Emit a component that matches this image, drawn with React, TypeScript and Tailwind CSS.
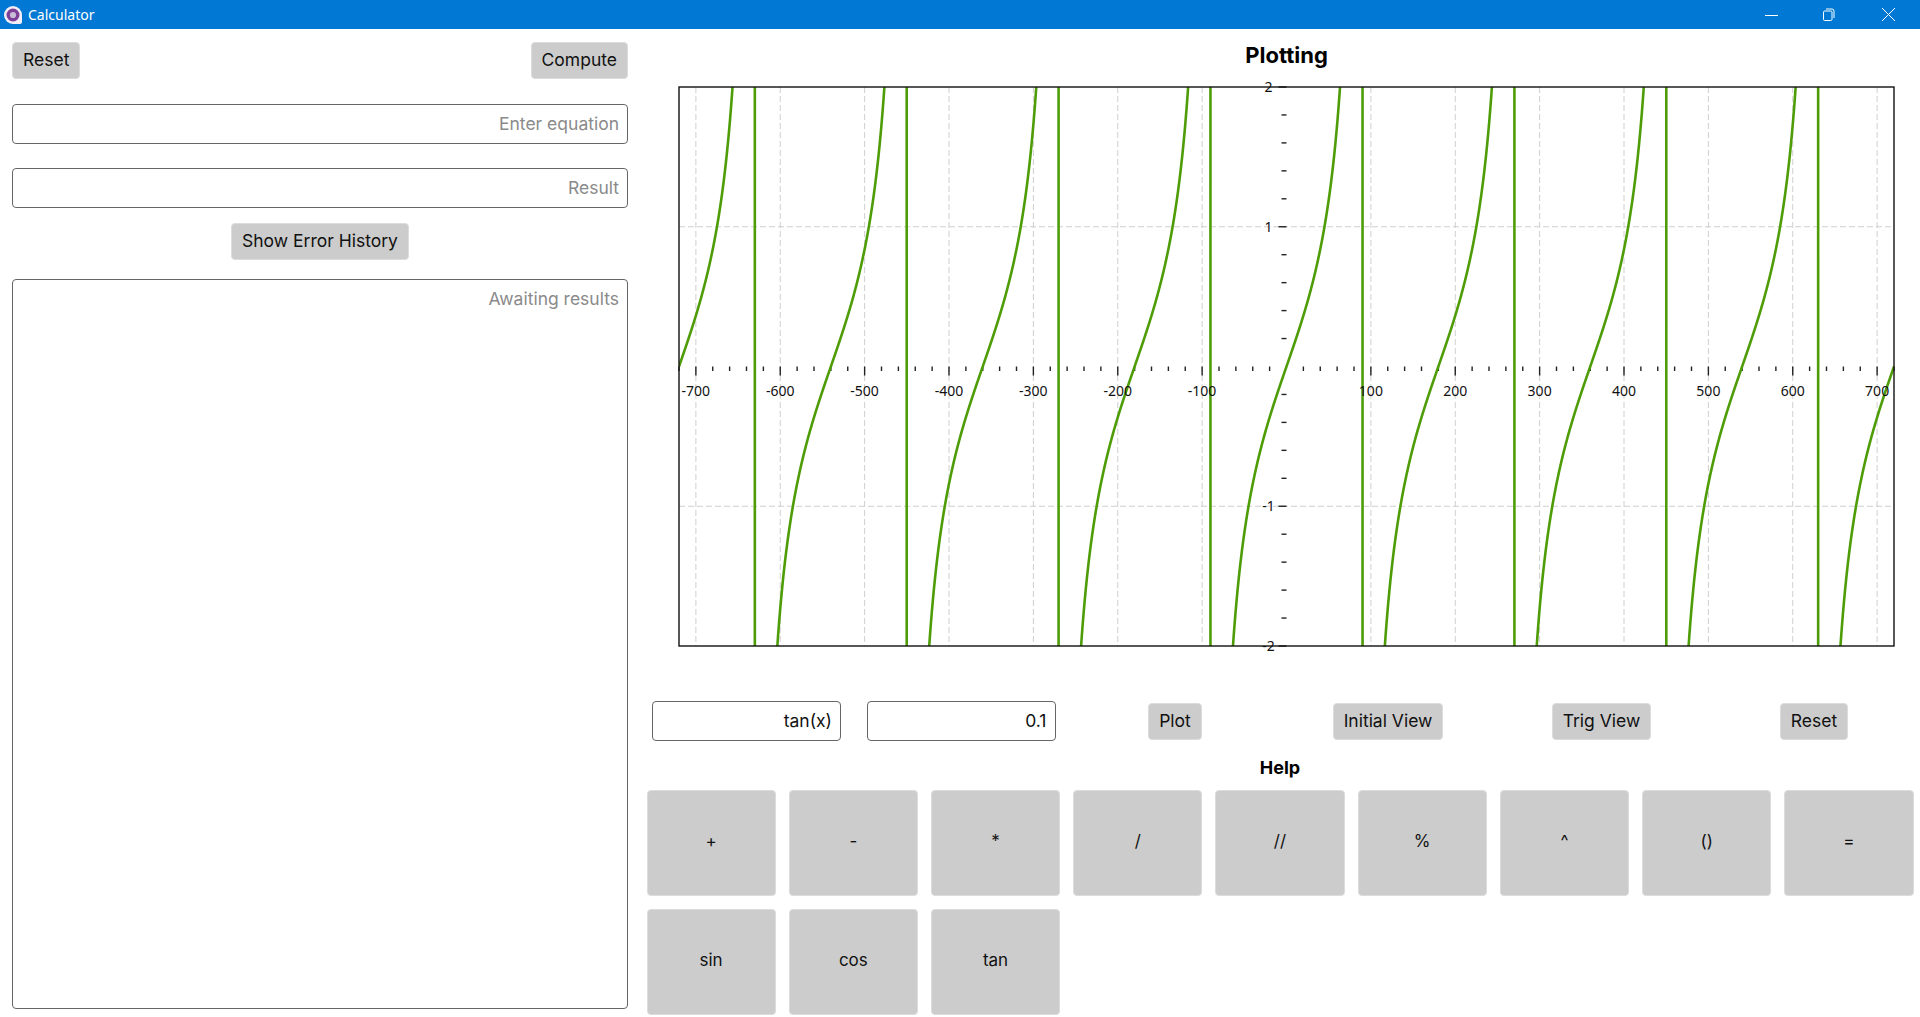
import React from 'react';

const W = 1215;
const H = 559;
const sx = W / 1440;
const sy = H / 4;
const px = (x: number) => W / 2 + x * sx;
const py = (y: number) => H / 2 - y * sy;

const buildCurve = () => {
  const pts: string[] = [];
  for (let d = -720; d <= 720; d += 0.25) {
    const t = Math.tan((d * Math.PI) / 180);
    pts.push(`${px(d).toFixed(2)},${py(Math.max(-40, Math.min(40, t))).toFixed(2)}`);
  }
  return pts.join(' ');
};

const Plot = () => {
  const xMajor: number[] = [];
  const xMinor: number[] = [];
  for (let v = -720; v <= 720; v += 20) {
    if (v === 0) continue;
    if (v % 100 === 0) xMajor.push(v);
    else xMinor.push(v);
  }
  const yMinor: number[] = [];
  for (let i = -9; i <= 9; i++) {
    if (i % 5 !== 0) yMinor.push(i * 0.2);
  }
  return (
    <svg width={W} height={H} viewBox={`0 0 ${W} ${H}`} className="block overflow-visible">
      <defs>
        <clipPath id="plot-area">
          <rect x="0" y="0" width={W} height={H} />
        </clipPath>
      </defs>
      {xMajor.map((v) => (
        <line key={v} x1={px(v)} x2={px(v)} y1={0} y2={H} stroke="#cfcfcf" strokeWidth="1" strokeDasharray="6 3" />
      ))}
      {[-1, 1].map((v) => (
        <line key={v} x1={0} x2={W} y1={py(v)} y2={py(v)} stroke="#cfcfcf" strokeWidth="1" strokeDasharray="6 3" />
      ))}
      {xMinor.map((v) => (
        <line key={v} x1={px(v)} x2={px(v)} y1={H / 2} y2={H / 2 + 4.5} stroke="#222" strokeWidth="1.4" />
      ))}
      {xMajor.map((v) => (
        <line key={v} x1={px(v)} x2={px(v)} y1={H / 2} y2={H / 2 + 9} stroke="#222" strokeWidth="1.4" />
      ))}
      {yMinor.map((v) => (
        <line key={v} x1={W / 2 - 5} x2={W / 2} y1={py(v)} y2={py(v)} stroke="#222" strokeWidth="1.4" />
      ))}
      {[-2, -1, 1, 2].map((v) => (
        <line key={v} x1={W / 2 - 8} x2={W / 2} y1={py(v)} y2={py(v)} stroke="#222" strokeWidth="1.4" />
      ))}
      <polyline points={buildCurve()} fill="none" stroke="#4e9d08" strokeWidth="2.6" clipPath="url(#plot-area)" />
      <rect x="0" y="0" width={W} height={H} fill="none" stroke="#111" strokeWidth="1.4" />
      {xMajor.map((v) => (
        <text key={v} x={px(v)} y={H / 2 + 29} textAnchor="middle" fontSize="14" fill="#111" className="font-['Noto_Sans',sans-serif]">
          {v}
        </text>
      ))}
      {[2, 1, -1, -2].map((v) => (
        <text key={v} x={W / 2 - 18} y={py(v) + 5} textAnchor="middle" fontSize="14" fill="#111" className="font-['Noto_Sans',sans-serif]">
          {v}
        </text>
      ))}
    </svg>
  );
};

const Btn = ({ label }: { label: string }) => (
  <button className="h-[37px] px-[10px] rounded-[4px] border border-[#dcdcdc] bg-[#cccccc] text-[17.5px] text-[#111] whitespace-nowrap">
    {label}
  </button>
);

const Field = ({ value, placeholder, className }: { value?: string; placeholder?: string; className?: string }) => (
  <div
    className={`h-10 rounded-[4px] border border-[#666] bg-white px-2 pt-px flex items-center justify-end text-[17.5px] ${
      value ? 'text-[#111]' : 'text-[#8a8a8a]'
    } ${className ?? ''}`}
  >
    {value ?? placeholder}
  </div>
);

const Key = ({ label }: { label: string }) => (
  <button className="h-[106px] pb-[2px] rounded-[4px] border border-[#dcdcdc] bg-[#cccccc] text-[17px] text-[#111]">{label}</button>
);

const keys = ['+', '-', '*', '/', '//', '%', '^', '()', '=', 'sin', 'cos', 'tan'];

export default function App() {
  return (
    <div className="h-screen w-full flex flex-col bg-white overflow-hidden font-['Inter',sans-serif]">
      <div className="h-[29px] shrink-0 bg-[#0078d4] flex items-center text-white pr-[3px]">
        <svg width="20" height="20" viewBox="0 0 20 20" className="ml-[3px]">
          <path d="M10 1a9 9 0 1 0 0 18h7a2 2 0 0 0 2-2v-7a9 9 0 0 0-9-9z" fill="#f3eef6" />
          <circle cx="10" cy="10" r="4.8" fill="#c9bcd6" stroke="#7d3f98" strokeWidth="3.4" />
        </svg>
        <span className="ml-[5px] text-[14px] font-['Noto_Sans',sans-serif]">Calculator</span>
        <div className="ml-auto flex">
          <div className="w-[58px] h-[29px] pr-[2px] flex items-center justify-center">
            <svg width="13" height="13" viewBox="0 0 13 13">
              <path d="M0 7.5h13" stroke="#fff" strokeWidth="1" />
            </svg>
          </div>
          <div className="w-[58px] h-[29px] pr-1 flex items-center justify-center">
            <svg width="13" height="13" viewBox="0 0 13 13" fill="none" stroke="#fff" strokeWidth="1">
              <rect x="1.5" y="3" width="8.5" height="9.5" rx="1.2" />
              <path d="M4 1h6a2 2 0 0 1 2 2v7" />
            </svg>
          </div>
          <div className="w-[58px] h-[29px] flex items-center justify-center">
            <svg width="13" height="13" viewBox="0 0 13 13">
              <path d="M0 0l13 13M13 0L0 13" stroke="#fff" strokeWidth="1" />
            </svg>
          </div>
        </div>
      </div>

      <div className="flex-1 flex min-h-0">
        <div className="w-[640px] shrink-0 px-3 pt-[13px] pb-2 flex flex-col">
          <div className="flex justify-between">
            <Btn label="Reset" />
            <Btn label="Compute" />
          </div>
          <Field placeholder="Enter equation" className="mt-[25px]" />
          <Field placeholder="Result" className="mt-6" />
          <div className="mt-[15px] flex justify-center">
            <Btn label="Show Error History" />
          </div>
          <div className="mt-[19px] flex-1 rounded-[4px] border border-[#666] px-2 pt-[6px] text-right text-[17.5px] text-[#8a8a8a]">
            Awaiting results
          </div>
        </div>

        <div className="flex-1 min-w-0">
          <div className="pl-[39px] pt-3">
            <div className="w-[1215px] text-center text-[22px] leading-7 font-bold text-black">Plotting</div>
            <div className="mt-[18px]">
              <Plot />
            </div>
          </div>
          <div className="mt-[55px] grid grid-cols-[213px_216px_212px_214px_213px_1fr] items-center justify-items-center">
            <Field value="tan(x)" className="w-[189px]" />
            <Field value="0.1" className="w-[189px]" />
            <Btn label="Plot" />
            <Btn label="Initial View" />
            <Btn label="Trig View" />
            <Btn label="Reset" />
          </div>
          <div className="mt-[17px] text-center text-lg leading-5 font-bold text-black">Help</div>
          <div className="mt-3 px-[6.5px] grid grid-cols-9 gap-x-[13px] gap-y-[13px]">
            {keys.map((k) => (
              <Key key={k} label={k} />
            ))}
          </div>
        </div>
      </div>
    </div>
  );
}
